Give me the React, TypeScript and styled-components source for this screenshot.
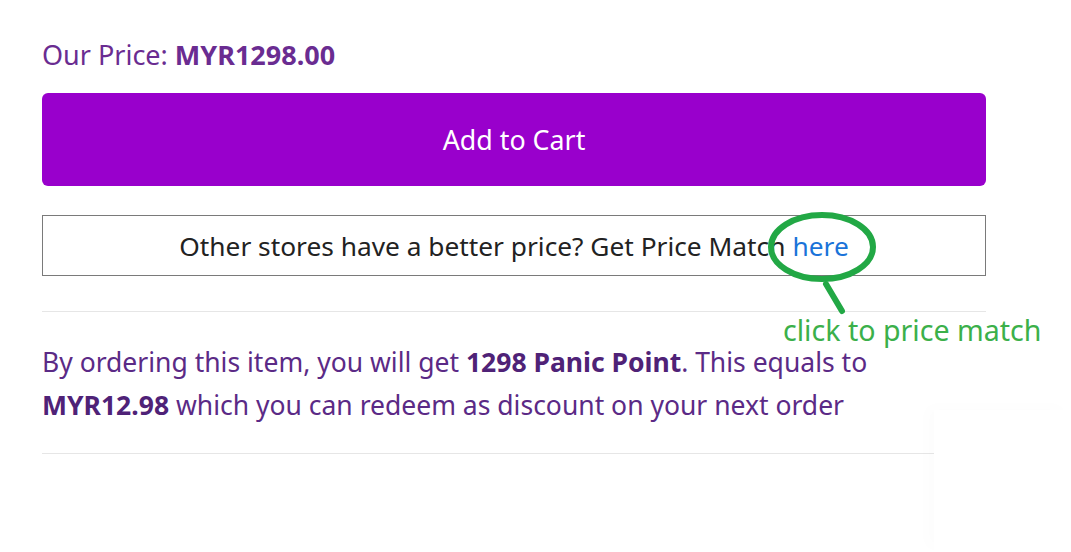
import React from 'react'
import styled, { createGlobalStyle } from 'styled-components'

const GlobalStyle = createGlobalStyle`
  html, body {
    margin: 0;
    padding: 0;
    background: #ffffff;
  }
  body {
    font-family: 'Noto Sans', 'Open Sans', sans-serif;
  }
`

const Page = styled.div`
  position: relative;
  width: 1071px;
  height: 552px;
  overflow: hidden;
  background: #ffffff;
`

const Content = styled.div`
  width: 944px;
  padding: 36px 0 0 42px;
  display: flex;
  flex-direction: column;
`

const PriceLine = styled.div`
  font-size: 27px;
  line-height: 38px;
  color: #6a2c91;
  margin-bottom: 19px;

  b {
    font-weight: 700;
  }
`

const CartButton = styled.button`
  height: 93px;
  width: 100%;
  border: none;
  border-radius: 6px;
  background: #9900cc;
  color: #ffffff;
  font-family: inherit;
  font-size: 26.8px;
  cursor: pointer;
`

const MatchBox = styled.div`
  margin-top: 29px;
  height: 59px;
  border: 1px solid #7a7a7a;
  display: flex;
  align-items: center;
  justify-content: center;
  font-size: 26.3px;
  color: #222222;
`

const MatchLink = styled.a`
  color: #1a73d9;
  text-decoration: none;
  margin-left: 7px;
`

const Spacer = styled.div`
  height: 35px;
`

const Divider = styled.hr<{ $width?: number }>`
  border: none;
  border-top: 1px solid #e6e6e6;
  margin: 0;
  width: ${({ $width }) => ($width ? `${$width}px` : '100%')};
`

const PointsText = styled.p`
  margin: 29px 0 26px;
  font-size: 26.5px;
  line-height: 43px;
  color: #5b2a86;

  b {
    font-weight: 700;
    color: #4f2277;
  }
`

const Fade = styled.div`
  position: absolute;
  left: 934px;
  top: 410px;
  width: 137px;
  height: 142px;
  background: #ffffff;
  box-shadow: -8px -4px 14px rgba(0, 0, 0, 0.012);
`

const Annotation = styled.svg`
  position: absolute;
  left: 0;
  top: 0;
  pointer-events: none;
`

const Note = styled.div`
  position: absolute;
  left: 783px;
  top: 310px;
  font-size: 28.6px;
  line-height: 40px;
  color: #3bb04a;
  white-space: nowrap;
`

export default function App() {
  return (
    <Page>
      <GlobalStyle />
      <Content>
        <PriceLine>
          Our Price: <b>MYR1298.00</b>
        </PriceLine>
        <CartButton>Add to Cart</CartButton>
        <MatchBox>
          Other stores have a better price? Get Price Match
          <MatchLink href="#">here</MatchLink>
        </MatchBox>
        <Spacer />
        <Divider />
        <PointsText>
          By ordering this item, you will get <b>1298 Panic Point</b>. This equals to
          <br />
          <b>MYR12.98</b> which you can redeem as discount on your next order
        </PointsText>
        <Divider $width={892} />
      </Content>
      <Fade />
      <Annotation width="1071" height="552" viewBox="0 0 1071 552">
        <ellipse cx="822" cy="247" rx="51" ry="32" fill="none" stroke="#22a845" strokeWidth="6" />
        <line x1="826" y1="284" x2="842" y2="311" stroke="#22a845" strokeWidth="6" strokeLinecap="round" />
      </Annotation>
      <Note>click to price match</Note>
    </Page>
  )
}
